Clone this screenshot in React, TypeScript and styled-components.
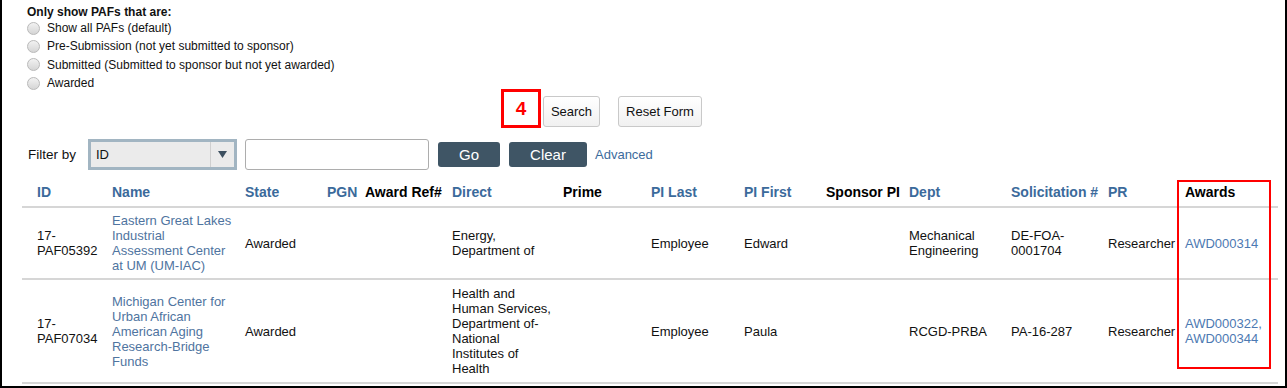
import React from "react";
import styled, { createGlobalStyle } from "styled-components";

const GlobalStyle = createGlobalStyle`
  body {
    margin: 0;
    font-family: "Liberation Sans", Arial, sans-serif;
    color: #111;
    background: #fff;
  }
`;

type Row = {
  id: string[];
  name: string;
  state: string;
  direct: string;
  piLast: string;
  piFirst: string;
  dept: string;
  solicitation: string;
  pr: string;
  awards: string[];
};

const rows: Row[] = [
  {
    id: ["17-", "PAF05392"],
    name: "Eastern Great Lakes Industrial Assessment Center at UM (UM-IAC)",
    state: "Awarded",
    direct: "Energy, Department of",
    piLast: "Employee",
    piFirst: "Edward",
    dept: "Mechanical Engineering",
    solicitation: "DE-FOA-0001704",
    pr: "Researcher",
    awards: ["AWD000314"],
  },
  {
    id: ["17-", "PAF07034"],
    name: "Michigan Center for Urban African American Aging Research-Bridge Funds",
    state: "Awarded",
    direct:
      "Health and Human Services, Department of-National Institutes of Health",
    piLast: "Employee",
    piFirst: "Paula",
    dept: "RCGD-PRBA",
    solicitation: "PA-16-287",
    pr: "Researcher",
    awards: ["AWD000322,", "AWD000344"],
  },
];

const columns = [
  { label: "ID", width: 90, link: true },
  { label: "Name", width: 133, link: true },
  { label: "State", width: 82, link: true },
  { label: "PGN", width: 38, link: true },
  { label: "Award Ref#", width: 87, link: false },
  { label: "Direct", width: 111, link: true },
  { label: "Prime", width: 88, link: false },
  { label: "PI Last", width: 93, link: true },
  { label: "PI First", width: 82, link: true },
  { label: "Sponsor PI", width: 83, link: false },
  { label: "Dept", width: 102, link: true },
  { label: "Solicitation #", width: 97, link: true },
  { label: "PR", width: 77, link: true },
  { label: "Awards", width: 93, link: false },
];

const options = [
  "Show all PAFs (default)",
  "Pre-Submission (not yet submitted to sponsor)",
  "Submitted (Submitted to sponsor but not yet awarded)",
  "Awarded",
];

const App = () => {
  return (
    <Frame>
      <GlobalStyle />
      <Options>
        <OptionsTitle>Only show PAFs that are:</OptionsTitle>
        {options.map((o) => (
          <RadioRow key={o}>
            <Radio />
            <span>{o}</span>
          </RadioRow>
        ))}
      </Options>

      <ButtonRow>
        <StepBadge>4</StepBadge>
        <LightButton $width={57}>Search</LightButton>
        <LightButton $width={84} $gap={18}>
          Reset Form
        </LightButton>
      </ButtonRow>

      <FilterRow>
        <FilterLabel>Filter by</FilterLabel>
        <SelectBox>
          <SelectValue>ID</SelectValue>
          <SelectArrow>
            <svg width="9" height="7" viewBox="0 0 9 7">
              <path d="M0 0 H9 L4.5 7 Z" fill="#3d5060" />
            </svg>
          </SelectArrow>
        </SelectBox>
        <TextInput />
        <DarkButton $width={62}>Go</DarkButton>
        <DarkButton $width={78}>Clear</DarkButton>
        <AdvancedLink>Advanced</AdvancedLink>
      </FilterRow>

      <Table>
        <colgroup>
          {columns.map((c) => (
            <col key={c.label} style={{ width: c.width }} />
          ))}
        </colgroup>
        <thead>
          <tr>
            {columns.map((c, i) => (
              <HeadCell key={c.label} $link={c.link} $first={i === 0}>
                {c.label}
              </HeadCell>
            ))}
          </tr>
        </thead>
        <tbody>
          {rows.map((r) => (
            <tr key={r.id.join("")}>
              <Cell $first $pr={10}>
                {r.id[0]}
                <br />
                {r.id[1]}
              </Cell>
              <Cell $pr={8}>
                <NameLink>{r.name}</NameLink>
              </Cell>
              <Cell>{r.state}</Cell>
              <Cell />
              <Cell />
              <Cell $pr={8}>{r.direct}</Cell>
              <Cell />
              <Cell>{r.piLast}</Cell>
              <Cell>{r.piFirst}</Cell>
              <Cell />
              <Cell $pr={6}>{r.dept}</Cell>
              <Cell $pr={15}>{r.solicitation}</Cell>
              <Cell $pr={4}>{r.pr}</Cell>
              <Cell>
                {r.awards.map((a) => (
                  <AwardLink key={a}>{a}</AwardLink>
                ))}
              </Cell>
            </tr>
          ))}
        </tbody>
      </Table>

      <Highlight />
    </Frame>
  );
};

export default App;

const Frame = styled.div`
  position: relative;
  width: 1287px;
  height: 388px;
  box-sizing: border-box;
  border: 2px solid #000;
  border-top: none;
  overflow: hidden;
`;

const Options = styled.div`
  padding: 5px 0 0 25px;
  font-size: 12px;
`;

const OptionsTitle = styled.div`
  font-weight: bold;
  line-height: 14px;
`;

const RadioRow = styled.div`
  display: flex;
  align-items: center;
  height: 18.3px;
  gap: 7px;
`;

const Radio = styled.span`
  display: inline-block;
  width: 11px;
  height: 11px;
  border-radius: 50%;
  border: 1px solid #b9b9b9;
  background: linear-gradient(#f2f2f2, #d5d5d5);
`;

const ButtonRow = styled.div`
  display: flex;
  align-items: flex-start;
  margin-top: 4px;
  padding-left: 499px;
`;

const StepBadge = styled.div`
  width: 34px;
  height: 33px;
  margin-top: -7px;
  margin-right: 2px;
  border: 3px solid #ff0000;
  display: flex;
  align-items: center;
  justify-content: center;
  color: #f00;
  font-weight: bold;
  font-size: 19px;
`;

const LightButton = styled.button<{ $width: number; $gap?: number }>`
  width: ${(p) => p.$width}px;
  height: 31px;
  margin-left: ${(p) => p.$gap ?? 0}px;
  padding: 0;
  border: 1px solid #c9c9c9;
  border-radius: 3px;
  background: linear-gradient(#ffffff, #f1f1f1);
  font-family: "Liberation Sans", Arial, sans-serif;
  font-size: 13px;
  color: #111;
`;

const FilterRow = styled.div`
  display: flex;
  align-items: center;
  margin-top: 11px;
  padding-left: 26px;
  height: 31px;
`;

const FilterLabel = styled.span`
  width: 60px;
  font-size: 13.5px;
`;

const SelectBox = styled.div`
  display: flex;
  width: 149px;
  height: 31px;
  box-sizing: border-box;
  border: 3px solid #a2b5c2;
  background: #ebebeb;
`;

const SelectValue = styled.div`
  flex: 1;
  display: flex;
  align-items: center;
  padding-left: 5px;
  font-size: 13px;
`;

const SelectArrow = styled.div`
  width: 23px;
  border-left: 1px solid #cfcfcf;
  display: flex;
  align-items: center;
  justify-content: center;
`;

const TextInput = styled.input`
  width: 184px;
  height: 31px;
  box-sizing: border-box;
  margin-left: 8px;
  border: 1px solid #adadad;
  border-radius: 3px;
  background: #fff;
`;

const DarkButton = styled.button<{ $width: number }>`
  width: ${(p) => p.$width}px;
  height: 25px;
  margin-left: 9px;
  border: none;
  border-radius: 3px;
  background: #3f5565;
  color: #fff;
  font-family: "Liberation Sans", Arial, sans-serif;
  font-size: 15px;
`;

const AdvancedLink = styled.a`
  margin-left: 8px;
  font-size: 13px;
  color: #3c6b9c;
`;

const Table = styled.table`
  margin: 11px 0 0 20px;
  width: 1256px;
  table-layout: fixed;
  border-collapse: collapse;
`;

const HeadCell = styled.th<{ $link: boolean; $first?: boolean }>`
  text-align: left;
  padding: 3px 0 5px ${(p) => (p.$first ? 15 : 0)}px;
  line-height: 17px;
  font-size: 14px;
  font-weight: bold;
  color: ${(p) => (p.$link ? "#3b6a9b" : "#000")};
  border-bottom: 2px solid #d6d6d6;
  white-space: nowrap;
`;

const Cell = styled.td<{ $first?: boolean; $pr?: number }>`
  padding: 5px ${(p) => p.$pr ?? 0}px 5px ${(p) => (p.$first ? 15 : 0)}px;
  font-size: 13px;
  line-height: 15px;
  vertical-align: middle;
  border-bottom: 2px solid #d6d6d6;
  color: #111;
  tr:last-child > & {
    padding-top: 6px;
    padding-bottom: 6px;
  }
`;

const NameLink = styled.a`
  color: #4f74a0;
`;

const AwardLink = styled.a`
  display: block;
  color: #4c79b2;
`;

const Highlight = styled.div`
  position: absolute;
  left: 1175px;
  top: 180px;
  width: 94px;
  height: 189px;
  box-sizing: border-box;
  border: 2px solid #ff0000;
  pointer-events: none;
`;
